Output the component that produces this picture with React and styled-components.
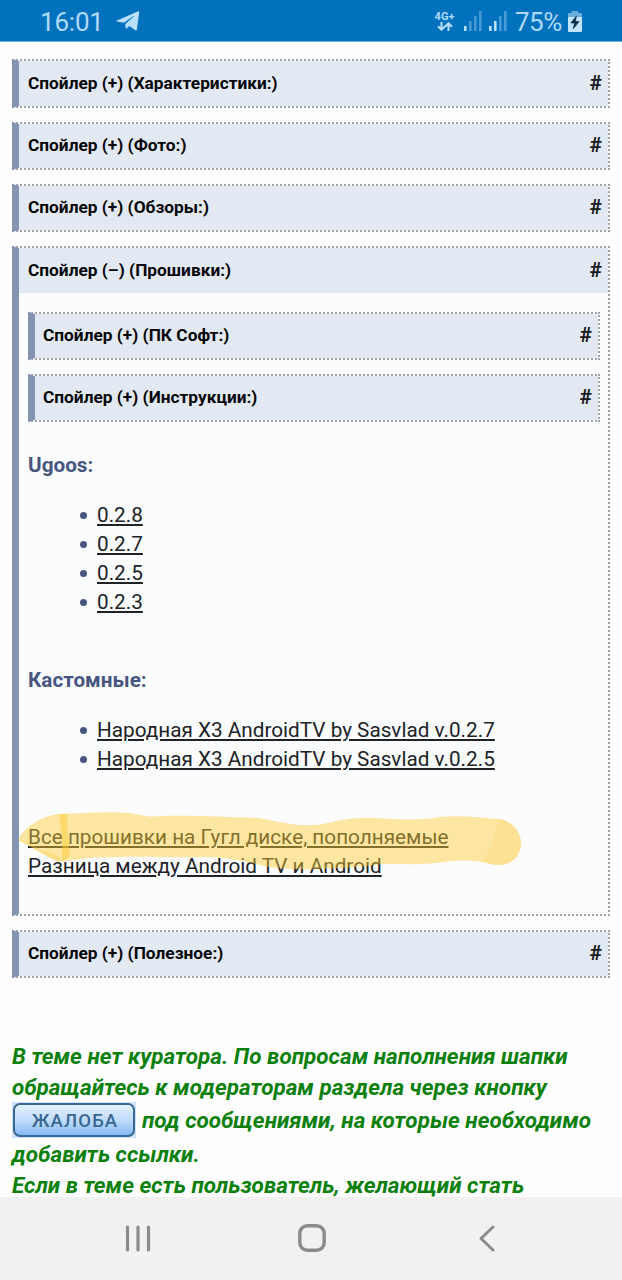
import React from "react";
import styled, { createGlobalStyle } from "styled-components";

const Global = createGlobalStyle`
  * { box-sizing: border-box; }
  body { margin: 0; background: #fff; font-family: Roboto, "Noto Sans", sans-serif; }
`;

const Screen = styled.div`
  width: 622px;
  height: 1280px;
  display: flex;
  flex-direction: column;
  overflow: hidden;
  background: #fefefe;
`;

const StatusBar = styled.header`
  flex: none;
  height: 42px;
  display: flex;
  align-items: center;
  justify-content: space-between;
  padding: 1px 40px 0 40px;
  background: #0071bd;
  border-bottom: 1px solid #6cabd6;
  color: #b0dafa;
`;

const StatusGroup = styled.div`
  display: flex;
  align-items: center;
  height: 40px;
`;

const Clock = styled.span`
  font-size: 26px;
  line-height: 40px;
  width: 63px;
  margin: 1px 13px 0 0;
  letter-spacing: -0.2px;
  white-space: nowrap;
`;

const Battery = styled.span`
  font-size: 26px;
  line-height: 40px;
  width: 48px;
  margin: 1px 5px 0 8px;
  letter-spacing: -0.5px;
  white-space: nowrap;
`;

const Network = styled.div`
  display: flex;
  flex-direction: column;
  align-items: center;
  width: 21px;
  margin-right: 9px;
  font-size: 11px;
  line-height: 11px;
  font-weight: 700;
`;

const Content = styled.main`
  flex: 1;
  min-height: 0;
  overflow: hidden;
  padding: 17px 12px 0;
`;

const SpoilerBox = styled.section`
  border: 2px dotted #a2a3a6;
  border-left: 7px solid #8494b3;
  background: #fbfcfe;
  margin: 0 0 14px;
`;

const SpoilerHead = styled.div`
  display: flex;
  align-items: center;
  justify-content: space-between;
  height: ${(p) => p.$height || 44}px;
  padding: 0 6px ${(p) => p.$lift || 0}px ${(p) => (p.$nested ? 8 : 9)}px;
  background: #e3e9f2;
`;

const SpoilerTitle = styled.span`
  color: #050608;
  font-size: 17.3px;
  font-weight: 700;
`;

const Anchor = styled.a`
  color: #17191c;
  font-size: 21px;
  font-weight: 700;
  line-height: 24px;
`;

const SpoilerBody = styled.div`
  position: relative;
  height: 621px;
  padding: 19px 8px 0 9px;
  color: #47557f;
`;

const Heading = styled.h3`
  margin: ${(p) => p.$top}px 0 0;
  font-size: 20.7px;
  line-height: 29px;
  font-weight: 700;
`;

const Firmwares = styled.ul`
  list-style: none;
  margin: 21px 0 0;
  padding: 0 0 0 52px;
`;

const Firmware = styled.li`
  display: flex;
  align-items: center;
  height: 29px;
  &::before {
    content: "";
    width: 7px;
    height: 7px;
    margin-right: 10px;
    border-radius: 50%;
    background: #47557f;
  }
`;

const Link = styled.a`
  color: #202226;
  font-size: 20.72px;
  line-height: 29px;
  white-space: nowrap;
  text-decoration: underline;
  text-decoration-thickness: 2px;
  text-underline-offset: 2px;
`;

const Links = styled.div`
  display: flex;
  flex-direction: column;
  align-items: flex-start;
  margin-top: 49px;
`;

const Marker = styled.svg`
  position: absolute;
  left: -3px;
  top: 511px;
  pointer-events: none;
`;

const Notice = styled.div`
  margin-top: 62px;
  color: #0b800b;
  font-size: 22.47px;
  font-weight: 700;
  font-style: italic;
`;

const NoticeLine = styled.div`
  display: flex;
  align-items: center;
  height: ${(p) => p.$height || 31}px;
  line-height: 24px;
  white-space: nowrap;
`;

const ComplaintFrame = styled.span`
  flex: none;
  display: flex;
  width: 124px;
  height: 36px;
  padding: 1px;
  margin: 0 6px 0 0;
  background: #cfe2f8;
`;

const Complaint = styled.span`
  flex: 1;
  display: flex;
  align-items: center;
  justify-content: center;
  border: 2px solid #396895;
  border-radius: 7px;
  background: linear-gradient(#e4f1fe, #bcdafa 55%, #83b9f3);
  color: #3c6790;
  font-size: 18.5px;
  font-style: normal;
  font-weight: 500;
  letter-spacing: 1.1px;
  padding: 2px 0 0 2px;
`;

const NavBar = styled.nav`
  flex: none;
  height: 83px;
  display: flex;
  align-items: center;
  padding: 0 0 1px 125px;
  background: #f1f1f1;
`;

const NavIcon = styled.svg`
  margin-right: ${(p) => p.$gap || 0}px;
  fill: none;
  stroke: #8b8b8b;
  stroke-linecap: round;
  stroke-linejoin: round;
`;

function Spoiler({ title, open, nested, height, lift, children }) {
  return (
    <SpoilerBox>
      <SpoilerHead $nested={nested} $height={height} $lift={lift}>
        <SpoilerTitle>{`Спойлер (${open ? "–" : "+"}) (${title}:)`}</SpoilerTitle>
        <Anchor>#</Anchor>
      </SpoilerHead>
      {children}
    </SpoilerBox>
  );
}

function Signal({ active }) {
  return (
    <svg width="18" height="20" viewBox="0 0 18 20" fill="#b9e0fc">
      {[0, 1, 2, 3].map((i) => (
        <rect key={i} x={i * 5} y={15 - i * 5} width="2.6" height={5 + i * 5} opacity={i < active ? 1 : 0.38} />
      ))}
    </svg>
  );
}

const SignalPair = styled.div`
  display: flex;
  gap: 7px;
`;

export default function App() {
  return (
    <Screen>
      <Global />
      <StatusBar>
        <StatusGroup>
          <Clock>16:01</Clock>
          <svg width="24" height="20" viewBox="0 0 24 20">
            <path d="M1 9.4 L21.6 .4 Q23.4 -.1 23.2 1.6 L20.9 18.4 Q20.5 20.2 18.9 19.1 L13.4 15 L10.6 17.6 Q9.7 18.2 9.6 17 L9.4 13 L18 5.2 Q18 4.8 17.6 5 L8 11.8 L1 10.6 Q-.3 10.1 1 9.4Z" fill="#b9e0fc" />
          </svg>
        </StatusGroup>
        <StatusGroup>
          <Network>
            4G+
            <svg width="16" height="9" viewBox="0 0 16 9" fill="none" stroke="#b9e0fc" strokeWidth="2">
              <path d="M4.5 0V7.5M1 4.3L4.5 7.7L8 4.3M11.5 9V1.5M8 4.7L11.5 1.3L15 4.7" />
            </svg>
          </Network>
          <SignalPair>
            <Signal active={1} />
            <Signal active={2} />
          </SignalPair>
          <Battery>75%</Battery>
          <svg width="14" height="21" viewBox="0 0 15 21" preserveAspectRatio="none">
            <path d="M4 0H11V2H14Q15 2 15 3V7H0V3Q0 2 1 2H4Z" fill="#69addd" />
            <path d="M0 6H15V20Q15 21 14 21H1Q0 21 0 20Z" fill="#c3e5fc" />
            <path d="M9 5L3 12H7L5.5 18L12 10.5H8Z" fill="#052b49" stroke="#052b49" strokeWidth=".6" />
          </svg>
        </StatusGroup>
      </StatusBar>
      <Content>
        <Spoiler title="Характеристики" height={45} lift={2} />
        <Spoiler title="Фото" lift={2} />
        <Spoiler title="Обзоры" lift={2} />
        <Spoiler title="Прошивки" open height={45} lift={2}>
          <SpoilerBody>
            <Spoiler title="ПК Софт" nested lift={3} />
            <Spoiler title="Инструкции" nested lift={3} />
            <Heading $top={29}>Ugoos:</Heading>
            <Firmwares>
              {["0.2.8", "0.2.7", "0.2.5", "0.2.3"].map((v) => (
                <Firmware key={v}><Link>{v}</Link></Firmware>
              ))}
            </Firmwares>
            <Heading $top={49}>Кастомные:</Heading>
            <Firmwares>
              {["0.2.7", "0.2.5"].map((v) => (
                <Firmware key={v}><Link>Народная X3 AndroidTV by Sasvlad v.{v}</Link></Firmware>
              ))}
            </Firmwares>
            <Links>
              <Link>Все прошивки на Гугл диске, пополняемые</Link>
              <Link>Разница между Android TV и Android</Link>
            </Links>
            <Marker width="510" height="70" viewBox="16 804 510 70">
              <path
                d="M18 840C24 828 38 817 58 814C82 813 110 811 129 813C140 814 146 818 160 816C192 815 230 817 258 818C278 821 290 826 315 825C330 824 340 817 375 818C400 820 427 820 440 817C462 815 480 818 500 819C513 822 521 832 521 843C521 856 512 865 499 865C490 865 483 861 474 861C458 860 449 861 437 863C410 866 390 862 369 866C330 869 296 871 268 867C245 861 225 857 202 857C165 858 145 856 118 857C90 857 72 860 59 862C47 857 32 846 18 840Z"
                fill="#ffcd32"
                fillOpacity=".45"
              />
              <path d="M59 814L67 814Q67 837 70 856L62 861Q63 836 59 814Z" fill="#ffc92e" fillOpacity=".5" />
              <path d="M18 840Q26 839 40 850Q51 852 61 858L58 862Q38 852 18 840Z" fill="#ffc92e" fillOpacity=".25" />
              <path d="M499 819C513 822 521 832 521 843C521 856 512 865 499 865C493 865 487 863 482 861Q494 844 499 819Z" fill="#f8c84a" fillOpacity=".14" />
            </Marker>
          </SpoilerBody>
        </Spoiler>
        <Spoiler title="Полезное" lift={2} />
        <Notice>
          <NoticeLine>В теме нет куратора. По вопросам наполнения шапки</NoticeLine>
          <NoticeLine>обращайтесь к модераторам раздела через кнопку</NoticeLine>
          <NoticeLine $height={36}>
            <ComplaintFrame><Complaint>ЖАЛОБА</Complaint></ComplaintFrame>
            под сообщениями, на которые необходимо
          </NoticeLine>
          <NoticeLine $height={32}>добавить ссылки.</NoticeLine>
          <NoticeLine $height={30}>Если в теме есть пользователь, желающий стать</NoticeLine>
        </Notice>
      </Content>
      <NavBar>
        <NavIcon $gap={147} width="26" height="27" viewBox="0 0 26 27" strokeWidth="3.2">
          <path d="M2.5 2V25M13 2V25M23.5 2V25" />
        </NavIcon>
        <NavIcon $gap={153} width="28" height="28" viewBox="0 0 28 28" strokeWidth="3.4">
          <rect x="1.8" y="1.8" width="24.4" height="24.4" rx="7.5" />
        </NavIcon>
        <NavIcon width="16" height="27" viewBox="0 0 16 27" strokeWidth="3">
          <path d="M14 2L2 13.5L14 25" />
        </NavIcon>
      </NavBar>
    </Screen>
  );
}
